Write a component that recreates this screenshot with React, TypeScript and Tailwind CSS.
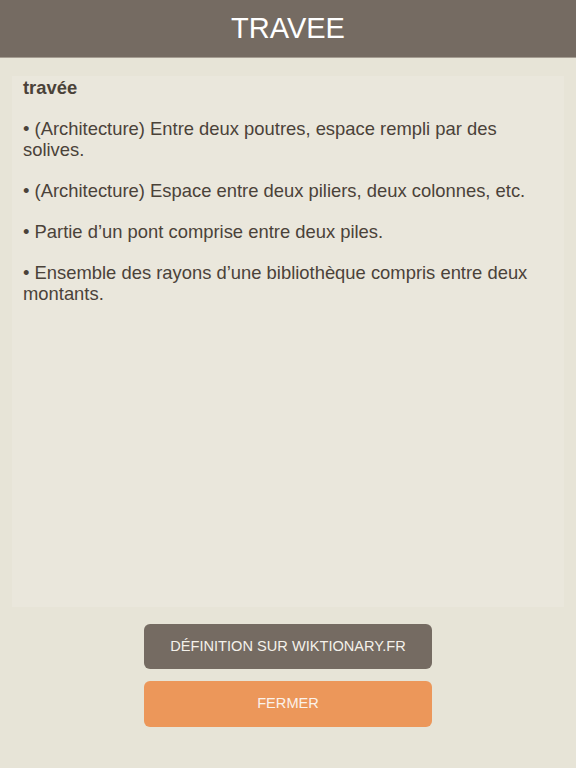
export default function App() {
  const defs = [
    '• (Architecture) Entre deux poutres, espace rempli par des solives.',
    '• (Architecture) Espace entre deux piliers, deux colonnes, etc.',
    '• Partie d’un pont comprise entre deux piles.',
    '• Ensemble des rayons d’une bibliothèque compris entre deux montants.',
  ]

  return (
    <div className="flex h-[768px] w-[576px] flex-col bg-[#e7e4d7] font-['Liberation_Sans',Arial,sans-serif]">
      {/* Header */}
      <header className="flex h-[58px] shrink-0 items-center justify-center border-b border-[#a59d92] bg-[#756b62]">
        <h1 className="text-[29px] leading-none text-white">TRAVEE</h1>
      </header>

      {/* Definition panel */}
      <div className="mx-3 mt-[18px] h-[531px] bg-[#eae7dc] px-[11px] pt-[1px] text-[18.4px] leading-[21px] text-[#4a4239]">
        <p className="font-bold">travée</p>
        <div className="mt-[20px] flex flex-col gap-5">
          {defs.map((d) => (
            <p key={d}>{d}</p>
          ))}
        </div>
      </div>

      {/* Buttons */}
      <div className="mt-[17px] flex flex-col items-center gap-3">
        <button className="h-[45px] w-[288px] rounded-md bg-[#756b62] text-[14.6px] text-[#f4f1ea]">
          DÉFINITION SUR WIKTIONARY.FR
        </button>
        <button className="h-[46px] w-[288px] rounded-md bg-[#ec975a] text-[14.6px] text-[#fbf2ea]">
          FERMER
        </button>
      </div>
    </div>
  )
}
